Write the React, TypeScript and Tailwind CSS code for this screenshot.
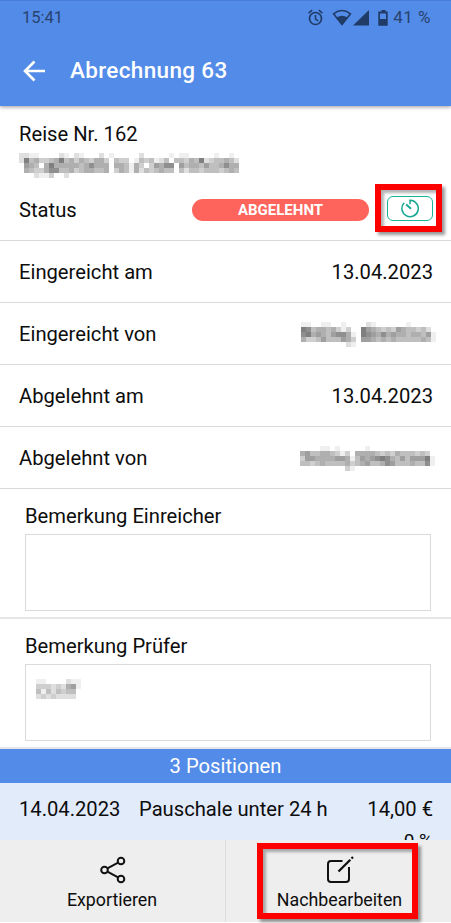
import clsx from 'clsx'

interface MosaicProps {
  rows: string[]
  className?: string
}

// One digit per cell, 0 is empty and 9 is the darkest
const Mosaic: React.FC<MosaicProps> = ({ rows, className }) => {
  const cols = rows[0].length

  return (
    <svg
      width={cols * 5}
      height={rows.length * 5}
      viewBox={`0 0 ${cols} ${rows.length}`}
      shapeRendering="crispEdges"
      className={clsx('block shrink-0', className)}
    >
      {rows.map((row, y) =>
        row
          .split('')
          .map((cell, x) => <rect key={`${x}-${y}`} x={x} y={y} width={1} height={1} opacity={Number(cell) / 16} />)
      )}
    </svg>
  )
}

const titleMosaic = [
  '22110000210210002010000020000010110000010010',
  '28453345845354355304330143412404435482344542',
  '06540585555545755505541530365770645546445755',
  '05433577445345544503541524345440424434443454',
  '00021130020000000000000000000000000000000000',
]

const submitterMosaic = [
  '0110011001000021000000100000',
  '0874554531300865434365443420',
  '0785654677510876575655455461',
  '0533464446530665454544444541',
  '0000000000210000000000000000',
]

const rejecterMosaic = [
  '0000011010000010000000000000',
  '0564455431305555434354443430',
  '0366555566514656787546466681',
  '0443454444534564457644454471',
  '0000000000310000000000000000',
]

const remarkMosaic = ['110000211', '333232561', '414243440', '232322220']

const StatusBar = () => (
  <div className="flex h-[35px] items-center border-t border-[#4a7dd8] pl-[22px] pr-[20px] text-[16.5px] text-[#29436f]">
    <span className="grow">15:41</span>
    <svg width="80" height="18" viewBox="0 0 80 18" fill="none" stroke="#213b67" className="mr-[5px]">
      <circle cx="7.5" cy="9.5" r="6" strokeWidth="1.7" />
      <path d="M7.5 6v4l2.7 1.8M.6 4.1l3.5-2.9M14.4 4.1l-3.5-2.9" strokeWidth="1.5" />
      <path d="M25.5 4.8Q34 -1.7 42.5 4.8L34 15.5Z" strokeWidth="1.5" />
      <path d="M28.5 8.5Q34 5.2 39.5 8.5L34 16Z" fill="#213b67" stroke="none" />
      <path d="M61 1v15.5H45Z" fill="#213b67" stroke="none" />
      <path d="M73.5 1h4v1.5h2.2v14.2h-9.4V2.5h3.2Z" fill="#213b67" stroke="none" />
      <path d="M72 4.5h6v5.5h-6Z" fill="#528be8" stroke="none" />
    </svg>
    <span className="text-[17px] tracking-[0.5px]">41 %</span>
  </div>
)

const Header = () => (
  <header className="relative h-[106px] shrink-0 bg-[#528be8] shadow-[0_1px_4px_rgba(0,0,0,0.4)]">
    <StatusBar />
    <div className="flex h-[71px] items-center gap-[24px] pl-[23px] text-white">
      <svg width="23" height="22" viewBox="0 0 23 22" fill="none" stroke="currentColor" strokeWidth="2.6">
        <path d="M11.5 1.5L2 11l9.5 9.5M2 11h20" />
      </svg>
      <h1 className="text-[22.5px] font-medium tracking-[0.35px]">Abrechnung 63</h1>
    </div>
  </header>
)

interface RowProps {
  label: string
  children: React.ReactNode
}

const Row: React.FC<RowProps> = ({ label, children }) => (
  <div className="flex h-[62px] shrink-0 items-center justify-between border-b border-[#d9d9d9] pl-[19px] pr-[18px] pt-px">
    <span>{label}</span>
    {children}
  </div>
)

const Remark: React.FC<{ label: string; children?: React.ReactNode }> = ({ label, children }) => (
  <div className="h-[130px] shrink-0 border-b-2 border-[#e6e6e6] pl-[25px] pr-5 pt-[13px]">
    <div className="h-[32px] leading-[28px]">{label}</div>
    <div className="h-[77px] border border-[#dadada] pl-[10px] pt-[14px]">{children}</div>
  </div>
)

const Footer = () => (
  <footer className="mb-px grid h-[82px] shrink-0 grid-cols-[226px_1fr] bg-[#eeeeee] text-[17.8px]">
    <div className="flex flex-col items-center border-r border-[#dcdcdc] pt-[16px]">
      <svg width="26" height="28" viewBox="0 0 26 28" fill="none" stroke="#111" strokeWidth="2">
        <circle cx="4.5" cy="14" r="3.3" />
        <circle cx="21" cy="5" r="3.3" />
        <circle cx="21" cy="23" r="3.3" />
        <path d="M7.4 12.4L18.1 6.6M7.4 15.6L18.1 21.4" />
      </svg>
      <span className="-ml-px mt-[2px] leading-[28px]">Exportieren</span>
    </div>
    <div className="relative flex flex-col items-center pl-[2px] pt-[16px]">
      <svg width="28" height="28" viewBox="0 0 28 28" fill="none" stroke="#111" strokeWidth="2">
        <path d="M16.5 5H5a3 3 0 0 0-3 3v15a3 3 0 0 0 3 3h15a3 3 0 0 0 3-3V11" />
        <path d="M12.5 15.5L24.3 3.700M25.5 2.5L27 1" strokeWidth="2.3" />
      </svg>
      <span className="mt-[2px] leading-[28px]">Nachbearbeiten</span>
      <div className="absolute left-[31px] top-[3px] h-[76px] w-[161px] border-6 border-[#ff0000] shadow-[3px_3px_3px_rgba(0,0,0,0.4),inset_3px_3px_3px_rgba(0,0,0,0.3)]" />
    </div>
  </footer>
)

const App = () => {
  return (
    <div className="flex h-[923px] w-[451px] flex-col overflow-hidden bg-white font-['Roboto',sans-serif] text-[20.2px] text-[#0d0d0d]">
      <Header />
      <main className="flex h-[734px] shrink-0 flex-col overflow-hidden">
        <section className="h-[135px] shrink-0 border-b border-[#d9d9d9] pl-[19px] pr-[18px] pt-[14px]">
          <div className="h-[33px] leading-[28px]">Reise Nr. 162</div>
          <Mosaic rows={titleMosaic} />
          <div className="mt-[17px] flex h-[29px] items-center">
            <span className="w-[173px] pt-[2px]">Status</span>
            <span className="h-[22px] w-[177px] rounded-full bg-[#ff645c] text-center text-[15px] font-bold leading-[22px] text-white">
              ABGELEHNT
            </span>
            <div className="relative ml-[18px] mt-[-2px] flex h-[25px] w-[46px] items-center justify-center rounded-[6px] border border-[#17b39b]">
              <svg width="18" height="19" viewBox="0 0 18 19" fill="none" stroke="#17a994" strokeWidth="1.5">
                <path d="M3.2 3.8A8.2 8.2 0 1 0 9 1.3v4" />
                <path d="M5.2 5.5L10 9.7" strokeWidth="2" />
              </svg>
              <div className="absolute left-[-13px] top-[-13px] h-[48px] w-[67px] border-6 border-[#ff0000] shadow-[3px_3px_3px_rgba(0,0,0,0.4),inset_3px_3px_3px_rgba(0,0,0,0.3)]" />
            </div>
          </div>
        </section>
        <Row label="Eingereicht am">13.04.2023</Row>
        <Row label="Eingereicht von">
          <Mosaic rows={submitterMosaic} className="-mr-[3px]" />
        </Row>
        <Row label="Abgelehnt am">13.04.2023</Row>
        <Row label="Abgelehnt von">
          <Mosaic rows={rejecterMosaic} className="-mr-[2px]" />
        </Row>
        <Remark label="Bemerkung Einreicher" />
        <Remark label="Bemerkung Prüfer">
          <Mosaic rows={remarkMosaic} />
        </Remark>
        <div className="h-[34px] shrink-0 bg-[#528be8] text-center leading-[34px] text-white">3 Positionen</div>
        <div className="h-[80px] shrink-0 bg-[#e2ebfa] pl-[19px] pr-[18px] pt-[12px]">
          <div className="flex leading-[28px]">
            <span className="w-[120px]">14.04.2023</span>
            <span className="grow">Pauschale unter 24 h</span>
            <span>14,00 €</span>
          </div>
          <div className="mt-[6px] text-right text-[19px] leading-[24px]">0 %</div>
        </div>
      </main>
      <Footer />
    </div>
  )
}

export default App
